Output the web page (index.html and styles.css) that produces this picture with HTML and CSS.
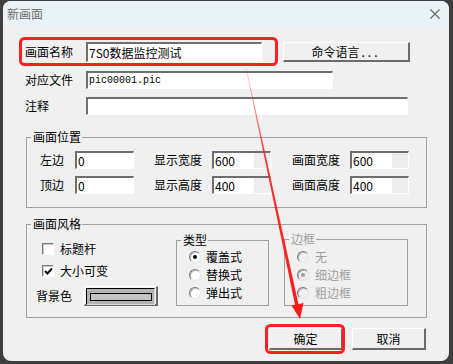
FILE: index.html
```html
<!DOCTYPE html>
<html>
<head>
<meta name="viewport" content="width=device-width, initial-scale=1">
<link rel="stylesheet" href="styles.css">
</head>
<body>
<div class="window">
  <div class="titlebar">
    <span class="title">新画面</span>
    <svg class="close" width="10" height="10" viewBox="0 0 10 10"><path d="M0.5 0.5L9.5 9.5M9.5 0.5L0.5 9.5" stroke="#666" stroke-width="1.1" fill="none"/></svg>
  </div>
  <div class="body">
    <div class="row row-name">
      <label class="lbl">画面名称</label>
      <input class="edit name-edit" type="text" value="7S0数据监控测试">
      <button class="btn cmd-btn">命令语言<span class="dots">...</span></button>
    </div>
    <div class="row row-file">
      <label class="lbl">对应文件</label>
      <input class="edit file-edit" type="text" value="pic00001.pic">
    </div>
    <div class="row row-note">
      <label class="lbl">注释</label>
      <input class="edit note-edit" type="text" value="">
    </div>

    <div class="group group-pos">
      <div class="group-title">画面位置</div>
      <div class="pos-row">
        <span class="lbl-short">左边</span><input class="edit num" type="text" value="0">
        <span class="lbl-long">显示宽度</span><input class="edit num half" type="text" value="600">
        <span class="lbl-long">画面宽度</span><input class="edit num half" type="text" value="600">
      </div>
      <div class="pos-row">
        <span class="lbl-short">顶边</span><input class="edit num" type="text" value="0">
        <span class="lbl-long">显示高度</span><input class="edit num half" type="text" value="400">
        <span class="lbl-long">画面高度</span><input class="edit num half" type="text" value="400">
      </div>
    </div>

    <div class="group group-style">
      <div class="group-title">画面风格</div>
      <div class="style-cols">
        <div class="style-left">
          <div class="check-row first"><span class="check"></span>标题杆</div>
          <div class="check-row"><span class="check"><svg width="9" height="9" viewBox="0 0 9 9"><path d="M1 4L3.5 6.5L8 1.5" stroke="#000" stroke-width="2" fill="none"/></svg></span>大小可变</div>
          <div class="bg-row">
            <span class="bg-lbl">背景色</span>
            <button class="btn color-btn"><span class="color-well"><span class="swatch"></span></span></button>
          </div>
        </div>
        <div class="subgroup type-box">
          <div class="group-title">类型</div>
          <div class="radio-row first"><span class="radio on"></span>覆盖式</div>
          <div class="radio-row"><span class="radio"></span>替换式</div>
          <div class="radio-row"><span class="radio"></span>弹出式</div>
        </div>
        <div class="subgroup frame-box off">
          <div class="group-title">边框</div>
          <div class="radio-row first"><span class="radio"></span>无</div>
          <div class="radio-row"><span class="radio on"></span>细边框</div>
          <div class="radio-row"><span class="radio"></span>粗边框</div>
        </div>
      </div>
    </div>

    <div class="actions">
      <button class="btn act-btn">确定</button>
      <button class="btn act-btn">取消</button>
    </div>
  </div>
</div>

<!-- red annotation marks drawn over the dialog -->
<svg class="marks" width="453" height="364" viewBox="0 0 453 364">
  <defs>
    <linearGradient id="fade" x1="0" y1="68" x2="0" y2="310" gradientUnits="userSpaceOnUse">
      <stop offset="0" stop-color="#ff3030" stop-opacity="0.25"/>
      <stop offset="0.35" stop-color="#ff2020" stop-opacity="0.9"/>
      <stop offset="1" stop-color="#ff1a1a"/>
    </linearGradient>
  </defs>
  <rect x="20.5" y="38.5" width="256" height="26" rx="4" fill="none" stroke="#ff1f1f" stroke-width="3"/>
  <rect x="266.5" y="325.5" width="77" height="27" rx="4" fill="none" stroke="#ff1f1f" stroke-width="3"/>
  <polygon points="246.4,67.9 245.8,68.1 295.8,308.4 299.2,307.6" fill="url(#fade)"/>
  <polygon points="300,319 291.5,305.5 303.5,303" fill="#ff1a1a"/>
</svg>
</body>
</html>
```

FILE: styles.css
```css
/* dialog shell */
body {
  margin: 0;
  background: #3f3f3f;
  font-family: "Noto Sans CJK SC", sans-serif;
  font-size: 12px;
  line-height: 16px;
  color: #000;
}

.window {
  margin: 1px 4px 3px 3px;
  height: 360px;
  background: #f0f0f0;
  border-radius: 8px;
  overflow: hidden;
}

.titlebar {
  height: 25px;
  background: #e9f2f6;
  display: flex;
  align-items: center;
  justify-content: space-between;
  padding: 0 9px 0 4px;
}

.title {
  color: #6d6d6d;
}

.body {
  padding: 16px 22px 0 22px;
}

/* classic sunken edit box */
.edit {
  box-sizing: border-box;
  height: 18px;
  margin: 0;
  padding: 0 1px;
  border-style: solid;
  border-width: 2px 1px 1px 2px;
  border-color: #6e6e6e #fff #fff #6e6e6e;
  background: #fff;
  font: inherit;
  color: #000;
  outline: none;
}

/* classic raised button */
.btn {
  box-sizing: border-box;
  height: 20px;
  margin: 0;
  padding: 0;
  border-style: solid;
  border-width: 1px 2px 2px 1px;
  border-color: #fff #6b6b6b #6b6b6b #fff;
  background: #f0f0f0;
  font: inherit;
  color: #000;
}

/* top rows */
.row {
  display: flex;
  align-items: center;
}

.row-file {
  margin-top: 9px;
}

.row-note {
  margin-top: 8px;
}

.lbl {
  width: 61px;
}

.name-edit {
  width: 176px;
  height: 20px;
}

.file-edit {
  width: 247px;
  font-family: "Liberation Mono", monospace;
  font-size: 10px;
}

.note-edit {
  width: 322px;
}

.cmd-btn {
  width: 127px;
  margin-left: 21px;
}

.dots {
  letter-spacing: 3px;
  margin-left: 2px;
}

/* group boxes */
.group,
.subgroup {
  box-sizing: border-box;
  border: 1px solid #a0a0a0;
}

.group {
  margin-left: 1px;
  width: 401px;
}

.group-title {
  width: fit-content;
  margin: -8px 0 0 4px;
  padding: 0 1px 0 2px;
  line-height: 14px;
  background: #f0f0f0;
}

.group-pos {
  margin-top: 22px;
  height: 71px;
}

.pos-row {
  display: flex;
  align-items: center;
  margin-top: 7px;
  padding-left: 13px;
}

.lbl-short {
  width: 35px;
}

.lbl-long {
  width: 58px;
  margin-left: 20px;
}

.lbl-long + .num + .lbl-long {
  margin-left: 21px;
}

.num {
  width: 59px;
}

.half {
  background: linear-gradient(to right, #fff 40px, #ededed 40px);
}

.group-style {
  margin-top: 16px;
  height: 94px;
}

.style-cols {
  display: flex;
  align-items: flex-start;
}

.style-left {
  box-sizing: border-box;
  width: 149px;
  padding-left: 9px;
}

.check-row {
  display: flex;
  align-items: center;
  height: 16px;
  margin: 6px 0 0 6px;
}

.check-row.first {
  margin-top: 10px;
}

.check {
  box-sizing: border-box;
  width: 12px;
  height: 12px;
  margin-right: 6px;
  border-style: solid;
  border-width: 1px;
  border-color: #7a7a7a #fff #fff #7a7a7a;
  box-shadow: inset 1px 1px #c8c8c8;
  background: #fff;
  display: flex;
  align-items: center;
  justify-content: center;
}

.bg-row {
  display: flex;
  align-items: center;
  margin-top: 7px;
}

.bg-lbl {
  width: 48px;
}

.color-btn {
  width: 74px;
  padding: 1px;
}

.color-well {
  display: flex;
  align-items: center;
  justify-content: center;
  height: 100%;
  border-style: solid;
  border-width: 1px;
  border-color: #000 #dcdcdc #dcdcdc #000;
  background: #b4b4b4;
}

.swatch {
  width: 60px;
  height: 6px;
  border: 1px solid #000;
  background: #c4c4c4;
}

.type-box {
  width: 93px;
  height: 66px;
  margin-top: 9px;
}

.frame-box {
  width: 124px;
  height: 67px;
  margin: 8px 0 0 15px;
}

.radio-row {
  display: flex;
  align-items: center;
  height: 16px;
  margin-top: 2px;
  padding-left: 12px;
}

.type-box .radio-row.first {
  margin-top: 2px;
}

.frame-box .radio-row.first {
  margin-top: 3px;
}

.radio {
  box-sizing: border-box;
  width: 12px;
  height: 12px;
  margin-right: 5px;
  border-radius: 50%;
  border: 1px solid;
  border-color: #7a7a7a #e6e6e6 #e6e6e6 #7a7a7a;
  box-shadow: inset 1px 1px #bdbdbd;
  background: #fff;
  display: flex;
  align-items: center;
  justify-content: center;
}

.radio.on::after {
  content: "";
  width: 4px;
  height: 4px;
  border-radius: 50%;
  background: #000;
}

.off {
  color: #a0a0a0;
}

.off .radio {
  background: #f0f0f0;
  margin-right: 6px;
}

.off .radio.on::after {
  background: #a0a0a0;
}

/* bottom buttons */
.actions {
  display: flex;
  justify-content: flex-end;
  gap: 9px;
  margin: 10px 1px 0 0;
}

.act-btn {
  width: 74px;
  height: 22px;
}

.marks {
  position: absolute;
  top: 0;
  left: 0;
  pointer-events: none;
}
```
